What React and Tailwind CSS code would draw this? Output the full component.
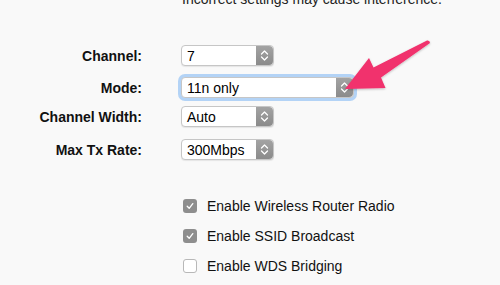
import React from "react";

function Stepper() {
  return (
    <div className="flex h-full w-[17px] items-center justify-center rounded-r-[4px] bg-gradient-to-b from-[#a3a3a3] to-[#8b8b8b]">
      <svg width="9" height="13" viewBox="0 0 9 13" fill="none">
        <path d="M1.5 5 L4.5 2 L7.5 5" stroke="white" strokeWidth="1.3" strokeLinecap="round" strokeLinejoin="round" />
        <path d="M1.5 8 L4.5 11 L7.5 8" stroke="white" strokeWidth="1.3" strokeLinecap="round" strokeLinejoin="round" />
      </svg>
    </div>
  );
}

function Select({ value, wide, focused }) {
  return (
    <div
      className={
        "flex h-[21px] items-stretch rounded-[4px] border border-[#c6c6c6] bg-white shadow-[0_1px_1px_rgba(0,0,0,0.08)] " +
        (wide ? "w-[173px] " : "w-[93px] ") +
        (focused ? "ring-[3px] ring-[#b3d3f6] border-[#9fc3ec]" : "")
      }
    >
      <div className="flex flex-1 items-center pl-[5px] text-[14px] leading-none text-black">{value}</div>
      <Stepper />
    </div>
  );
}

function Row({ label, children, className }) {
  return (
    <div className={"flex items-center " + (className || "")}>
      <div className="w-[142px] text-right text-[14px] font-bold leading-none text-[#111]">{label}</div>
      <div className="ml-[39px]">{children}</div>
    </div>
  );
}

function Check({ checked, label, className }) {
  return (
    <div className={"flex items-center " + (className || "")}>
      {checked ? (
        <div className="flex h-[14px] w-[14px] items-center justify-center rounded-[3px] bg-[#8e8e8e]">
          <svg width="10" height="10" viewBox="0 0 10 10" fill="none">
            <path d="M2.2 5.3 L4.2 7.3 L7.8 2.6" stroke="white" strokeWidth="1.3" strokeLinecap="round" strokeLinejoin="round" />
          </svg>
        </div>
      ) : (
        <div className="h-[14px] w-[14px] rounded-[3px] border border-[#b8b8b8] bg-white" />
      )}
      <div className="ml-[10px] text-[14px] leading-none text-[#111]">{label}</div>
    </div>
  );
}

export default function App() {
  return (
    <div
      className="relative h-[285px] w-[500px] overflow-hidden bg-[#f9f9f9]"
      style={{ fontFamily: '"Liberation Sans", Arial, sans-serif' }}
    >
      <div className="-mt-[9px] ml-[182px] text-[14px] leading-[16px] text-[#222]">
        Incorrect settings may cause interference.
      </div>
      <div className="mt-[38px] flex flex-col">
        <Row label="Channel:" className="h-[21px]">
          <Select value="7" />
        </Row>
        <Row label="Mode:" className="mt-[11px] h-[21px]">
          <Select value="11n only" wide focused />
        </Row>
        <Row label="Channel Width:" className="mt-[8px] h-[21px]">
          <Select value="Auto" />
        </Row>
        <Row label="Max Tx Rate:" className="mt-[12px] h-[21px]">
          <Select value="300Mbps" />
        </Row>
      </div>
      <div className="ml-[183px] mt-[39px] flex flex-col">
        <Check checked label="Enable Wireless Router Radio" className="h-[14px]" />
        <Check checked label="Enable SSID Broadcast" className="mt-[16px] h-[14px]" />
        <Check label="Enable WDS Bridging" className="mt-[16px] h-[14px]" />
      </div>
      <svg className="pointer-events-none absolute left-0 top-0" width="500" height="285" viewBox="0 0 500 285">
        <defs>
          <filter id="sh" x="-20%" y="-20%" width="140%" height="140%">
            <feDropShadow dx="0" dy="1" stdDeviation="1" floodColor="#000" floodOpacity="0.25" />
          </filter>
        </defs>
        <path
          d="M345 89 L369 58 L373.5 67.5 L427 40.5 Q430 40 430 43 L381 77.5 L385.5 88 Z"
          fill="#f1316d"
          filter="url(#sh)"
        />
      </svg>
    </div>
  );
}
